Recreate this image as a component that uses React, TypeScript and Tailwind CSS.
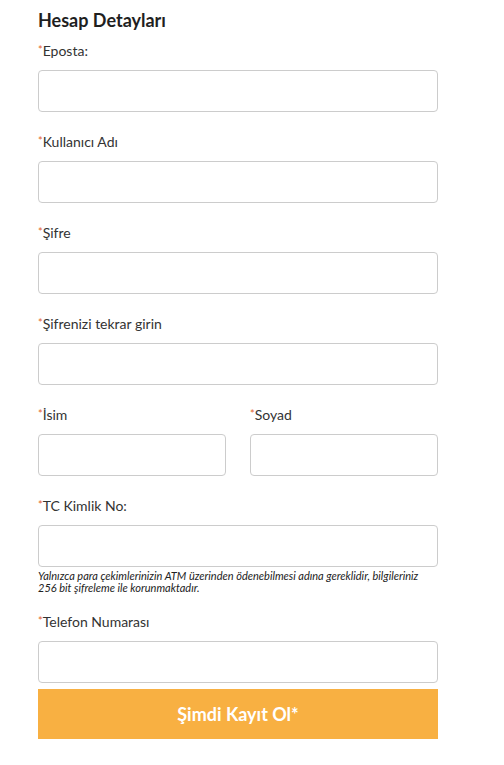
import React from "react";

const font = { fontFamily: '"Source Sans Pro", Lato, "Noto Sans", sans-serif' };

function Label({ text }: { text: string }) {
  return (
    <div className="h-[20px] leading-[20px] text-[14px] text-[#333333] mb-[9px]">
      <span className="text-[#e2622c] text-[11px] align-top relative top-[-1px]">*</span>
      {text}
    </div>
  );
}

function Input() {
  return <input className="block w-full h-[42px] border border-[#cccccc] rounded-[4px] bg-white outline-none" />;
}

export default function App() {
  return (
    <div className="w-[504px] h-[765px] bg-white" style={font}>
      <div className="w-[400px] ml-[38px] pt-[8px]">
        <h2 className="text-[18px] leading-[24px] font-bold text-[#1f1f1f] mb-[9px]">Hesap Detayları</h2>
        <div className="mb-[20px]">
          <Label text="Eposta:" />
          <Input />
        </div>
        <div className="mb-[20px]">
          <Label text="Kullanıcı Adı" />
          <Input />
        </div>
        <div className="mb-[20px]">
          <Label text="Şifre" />
          <Input />
        </div>
        <div className="mb-[20px]">
          <Label text="Şifrenizi tekrar girin" />
          <Input />
        </div>
        <div className="mb-[20px] flex gap-[24px]">
          <div className="w-[188px]">
            <Label text="İsim" />
            <Input />
          </div>
          <div className="w-[188px]">
            <Label text="Soyad" />
            <Input />
          </div>
        </div>
        <div className="mb-[18px]">
          <Label text="TC Kimlik No:" />
          <Input />
          <p className="mt-[3px] text-[11px] leading-[12px] italic text-[#222222] whitespace-nowrap">
            Yalnızca para çekimlerinizin ATM üzerinden ödenebilmesi adına gereklidir, bilgileriniz
            <br />
            256 bit şifreleme ile korunmaktadır.
          </p>
        </div>
        <div>
          <Label text="Telefon Numarası" />
          <Input />
        </div>
        <button className="mt-[6px] w-full h-[50px] bg-[#f8b042] text-white font-bold text-[18px]">
          Şimdi Kayıt Ol*
        </button>
      </div>
    </div>
  );
}
